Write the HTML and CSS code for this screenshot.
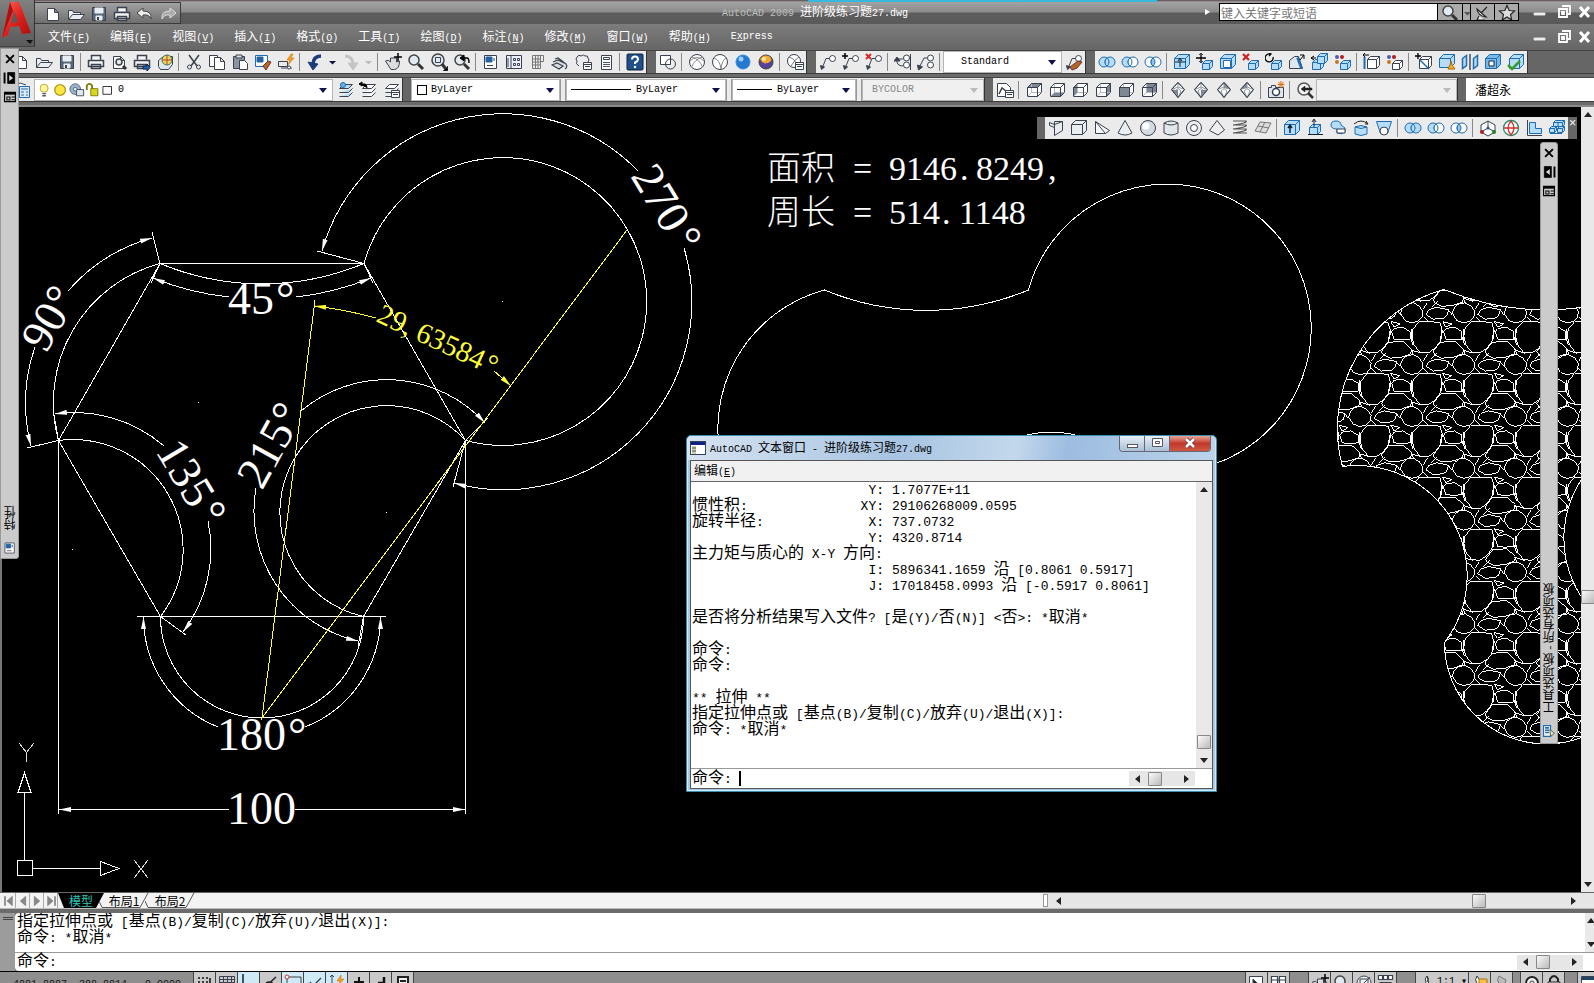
FILE: index.html
```html
<!DOCTYPE html>
<html lang="zh-CN">
<head>
<meta charset="utf-8">
<title>AutoCAD 2009 进阶级练习题27.dwg</title>
<link rel="stylesheet" href="styles.css">
</head>
<body>
<header class="chrome">
  <button class="app-button" aria-label="应用程序菜单">
    <svg width="34" height="46" viewBox="0 0 34 46">
      <defs><linearGradient id="red" x1="0" y1="0" x2="1" y2="1"><stop offset="0" stop-color="#ff6a5c"/><stop offset=".5" stop-color="#e0201c"/><stop offset="1" stop-color="#a30d0d"/></linearGradient></defs>
      <path d="M10 2h9l12 31-9 1-3-8-9 1-2 8-6 3z" fill="url(#red)"/>
      <path d="M10 2l3 9L2 38l1-4z" fill="#a81212"/>
      <path d="M14 11l4 11-7 1z" fill="#5a5a5a"/>
      <path d="M26 40h7l-3 4z" fill="#111"/>
    </svg>
  </button>
  <div class="titlebar">
    <div class="quick" data-icons="new openq saveq printq undoq redoq"></div>
    <h1 class="title"><span class="dim">AutoCAD 2009</span> <span class="z">进阶级练习题</span>27.dwg</h1>
    <div class="search">
      <span class="tri-right"></span>
      <input class="search-box z" type="text" placeholder="键入关键字或短语" aria-label="搜索">
      <div class="search-buttons" data-icons="zoom dropgray dish star"></div>
    </div>
    <div class="win-buttons" data-icons="wmin wmax wclose"></div>
  </div>
  <div class="menubar">
    <nav class="menus">
      <button><span class="z">文件</span>(<u>F</u>)</button>
      <button><span class="z">编辑</span>(<u>E</u>)</button>
      <button><span class="z">视图</span>(<u>V</u>)</button>
      <button><span class="z">插入</span>(<u>I</u>)</button>
      <button><span class="z">格式</span>(<u>O</u>)</button>
      <button><span class="z">工具</span>(<u>T</u>)</button>
      <button><span class="z">绘图</span>(<u>D</u>)</button>
      <button><span class="z">标注</span>(<u>N</u>)</button>
      <button><span class="z">修改</span>(<u>M</u>)</button>
      <button><span class="z">窗口</span>(<u>W</u>)</button>
      <button><span class="z">帮助</span>(<u>H</u>)</button>
      <button>E<u>x</u>press</button>
    </nav>
    <div class="win-buttons" data-icons="wmin wmax wclose"></div>
  </div>
  <div class="bars">
    <div class="bar bar-first" data-icons="new open save | print preview plot publish | cut copy paste match block | undo drop redo dropoff | pan zoom zoomwin zoomprev | props center palette sheet markup calc | help"></div>
    <div class="bar" data-icons="vs2d | wire3 wireh ball orb | vsman"></div>
    <div class="bar"><div class="run" data-icons="leader leaderadd leaderdel | leaderalign leadercol |"></div>
      <label class="combo w-std"><select aria-label="多重引线样式"><option>Standard</option></select></label>
      <div class="run" data-icons="leaderstyle"></div></div>
    <div class="bar" data-icons="union subtract intersect | extrudeface moveface offsetface delface rotface taperface copyface colorface | copyedge coloredge | imprint clean separate shell check"></div>
  </div>
  <div class="bars bars-second">
    <div class="bar bar-first"><div class="run" data-icons="layerprops"></div>
      <label class="combo w-layer"><span class="layer-icons" data-glyphs="bulb sun freeze lock swatch"></span><select aria-label="图层"><option>0</option></select></label>
      <div class="run" data-icons="layercur layerprev layerstate"></div></div>
    <div class="bar">
      <label class="combo w-color"><i class="swatch"></i><select aria-label="颜色"><option>ByLayer</option></select></label><i class="grip"></i>
      <label class="combo w-ltype"><i class="rule"></i><select aria-label="线型"><option>ByLayer</option></select></label><i class="grip"></i>
      <label class="combo w-lwt"><i class="rule"></i><select aria-label="线宽"><option>ByLayer</option></select></label><i class="grip"></i>
      <label class="combo w-plot off"><select aria-label="打印样式" disabled><option>BYCOLOR</option></select></label></div>
    <div class="bar"><div class="run" data-icons="viewman | vtop vbottom vleft vright vfront vback | iso1 iso2 iso3 iso4 | camera | vprev"></div>
      <label class="combo w-view off"><select aria-label="视图" disabled><option></option></select></label></div>
    <div class="bar bar-last"><label class="combo w-user z"><select aria-label="工作空间"><option>潘超永</option></select></label></div>
  </div>
</header>

<main class="workspace">
  <svg class="drawing" role="img" aria-label="图形">
    <defs>
      <marker id="arrow" markerUnits="userSpaceOnUse" markerWidth="13" markerHeight="6" refX="12" refY="3" orient="auto"><path d="M0 0.5L12 3L0 5.5z" fill="context-stroke"/></marker>
      <g id="stones">
        <path d="M41 40L48 22L62 11L80 9L97 18L109 35L106 52L95 64L75 69L55 62Z"/>
        <path d="M118 44L126 30L150 22L186 30L180 48L170 55L140 58Z"/>
        <path d="M97 66L138 66L160 68L166 90L160 125L145 145L125 159L100 158L82 135L76 110L78 88Z"/>
        <path d="M15 95L22 86L48 82L70 95L70 118L45 120L22 118Z"/>
        <path d="M-16 155L5 127L50 125L75 148L72 162L45 172L10 175L-10 165Z"/>
        <path d="M12 65L40 72L22 82Z"/>
        <path d="M74 86V120M70 110L79 136M12 90L8 118M-3 159L-22 178M110 28L122 8M110 50L124 64M72 150L104 160M186 32L196 44M74 148L80 165"/>
      </g>
      <path id="shape" d="M58.5 440.5A143.9 143.9 0 0 1 160 263.5A265.9 265.9 0 0 0 364 263.5A143.9 143.9 0 1 1 465.5 440.5A106.7 106.7 0 1 0 363.5 616.5A101.5 101.5 0 0 1 160.5 616.5A110.1 110.1 0 0 0 58.5 440.5Z"/>
      <clipPath id="hatched"><use href="#shape" x="1284" y="26"/></clipPath>
    </defs>
    <g transform="translate(0 -107)">
      <g class="line">
        <use href="#shape"/>
        <use href="#shape" x="664.5" y="26.5"/>
        <use href="#shape" x="1284" y="26"/>
        <g clip-path="url(#hatched)"><g id="gravel" class="gravel" transform="translate(1386.700 351.700) scale(.3333)"></g></g>
        <path d="M160 263.5H364L465.5 440.5L363.5 616.5M160.5 616.5L58.5 440.5L160 263.5M137 616.5H386M58.5 440.5V814M465.5 440.5V814"/>
        <path d="M364 263.5L317 251M465.5 440.5L453 487M160 263.5L152 232M58.5 440.5L27 448M160 263.5L151 283M364 263.5L373 283M58.5 440.5L53 409M160.5 616.5L186 635M465.5 440.5L488 418M363.5 616.5L358 647"/>
        <g marker-end="url(#arrow)">
          <path d="M638 171A188 188 0 0 0 322 251"/><path d="M684 248A188 188 0 0 1 454 483"/>
          <path d="M68 291A171 171 0 0 1 152 238"/><path d="M35 347A171 171 0 0 0 31 446"/>
          <path d="M229 297A282 282 0 0 1 153 278"/><path d="M296 297A282 282 0 0 0 371 278"/>
          <path d="M164 446A137.7 137.7 0 0 0 55 414"/><path d="M208 521A137.7 137.7 0 0 1 183 632"/>
          <path d="M301 411A133 133 0 0 1 485 423"/><path d="M256 488A133 133 0 0 0 358 641"/>
          <path d="M218 727A118.5 118.5 0 0 1 143.5 617"/><path d="M305 727A118.5 118.5 0 0 0 380.5 617"/>
          <path d="M229 809.5H59"/><path d="M295 809.5H465"/>
        </g>
        <path d="M24.5 860V793M18 792.5L24.5 773L31 792.5ZM33 868.5H100M100.5 861.5L119 868.5L100.5 875.5ZM17.5 860.5H32.5V875.5H17.5Z"/>
        <path d="M19 743L26.500 752.500L34 743M26.500 752.500V762M134 860L148 878M148 860L134 878" stroke="#ddd"/>
        <path d="M502 301h1M198 402h1M386 512h1M72 549h1"/>
      </g>
      <g class="line yellow">
        <path d="M315 300L262 718L627 230"/>
        <path d="M376 318A415 415 0 0 0 314 306" marker-end="url(#arrow)"/><path d="M494 371A415 415 0 0 1 511 386" marker-end="url(#arrow)"/>
      </g>
      <g class="dims">
        <text x="228" y="314">45<tspan x="276">°</tspan></text>
        <text x="217" y="750">180<tspan x="288">°</tspan></text>
        <text x="227" y="824">100</text>
        <text transform="translate(46 354) rotate(-60)">90<tspan x="47">°</tspan></text>
        <text transform="translate(155 451) rotate(59)">135<tspan x="73">°</tspan></text>
        <text transform="translate(262 491) rotate(-61)">215<tspan x="70">°</tspan></text>
        <text transform="translate(630 176) rotate(59)">270<tspan x="74">°</tspan></text>
        <text class="small" transform="translate(375 321) rotate(25)">29,<tspan x="43">63584</tspan><tspan x="118">°</tspan></text>
      </g>
      <g class="note">
        <text y="180"><tspan x="767">面积</tspan><tspan x="853">=</tspan><tspan x="889">9146</tspan><tspan x="960">.</tspan><tspan x="976">8249</tspan><tspan x="1048">,</tspan></text>
        <text y="224"><tspan x="767">周长</tspan><tspan x="853">=</tspan><tspan x="889">514</tspan><tspan x="942">.</tspan><tspan x="959">1148</tspan></text>
      </g>
    </g>
  </svg>

  <div class="vscroll"><i class="arrow up"></i><i class="thumb"></i><i class="arrow down"></i></div>

  <aside class="palette palette-left">
    <div data-icons="pclose phide pmenu" class="palette-buttons"></div>
    <span class="vertical z">特性</span>
    <div data-icons="props" class="palette-buttons"></div>
  </aside>
  <aside class="palette palette-right">
    <div data-icons="pclose phide2 pmenu" class="palette-buttons"></div>
    <span class="vertical z">工具选项板 - 所有选项板</span>
    <div data-icons="toolpal" class="palette-buttons"></div>
  </aside>

  <div class="bar floating" data-icons="polysolid box wedge cone sphere cylinder torus pyramid helix planar | extrude presspull sweep revolve loft | union subtract intersect | orbit3 globe ucs array3"><button class="float-close" aria-label="关闭">×</button></div>

  <section class="text-window">
    <header class="tw-title">
      <svg width="16" height="16"><rect x=".5" y="1.500" width="15" height="13" fill="#fff" stroke="#345"/><path d="M1 2h14v3H1z" fill="#14208a"/><path d="M2 6h4v8H2z" fill="#cfcfae"/><path d="M2 8h4M2 11h4" stroke="#555"/></svg>
      <h2>AutoCAD <span class="z">文本窗口</span> - <span class="z">进阶级练习题</span>27.dwg</h2>
      <div class="tw-buttons"><button aria-label="最小化"><svg width="24" height="15"><rect x="7.500" y="8.500" width="10" height="3" fill="#fff" stroke="#556"/></svg></button><button aria-label="最大化"><svg width="24" height="15"><path d="M7.500 2.500h10v8h-10zM10.500 5.500h4v2h-4z" fill="#fff" stroke="#556"/></svg></button><button class="close" aria-label="关闭"><svg width="40" height="15"><path d="M16 3l8 8M24 3l-8 8" stroke="#733" stroke-width="4"/><path d="M16 3l8 8M24 3l-8 8" stroke="#fff" stroke-width="2.500"/></svg></button></div>
    </header>
    <div class="tw-body">
      <nav class="tw-menu"><button><span class="z">编辑</span>(<u>E</u>)</button></nav>
      <div class="tw-log">
        <div class="log">
          <p class="row"><b></b><i>Y:</i><span>1.7077E+11</span></p>
          <p class="row"><b><span class="c">惯性积</span>:</b><i>XY:</i><span>29106268009.0595</span></p>
          <p class="row"><b><span class="c">旋转半径</span>:</b><i>X:</i><span>737.0732</span></p>
          <p class="row"><b></b><i>Y:</i><span>4320.8714</span></p>
          <p><span class="c">主力矩与质心的</span> X-Y <span class="c">方向</span>:</p>
          <p class="row"><b></b><i>I:</i><span>5896341.1659 <span class="c">沿</span> [0.8061 0.5917]</span></p>
          <p class="row"><b></b><i>J:</i><span>17018458.0993 <span class="c">沿</span> [-0.5917 0.8061]</span></p>
          <p></p>
          <p><span class="c">是否将分析结果写入文件</span>? [<span class="c">是</span>(Y)/<span class="c">否</span>(N)] &lt;<span class="c">否</span>&gt;: *<span class="c">取消</span>*</p>
          <p></p>
          <p><span class="c">命令</span>:</p>
          <p><span class="c">命令</span>:</p>
          <p></p>
          <p>** <span class="c">拉伸</span> **</p>
          <p><span class="c">指定拉伸点或</span> [<span class="c">基点</span>(B)/<span class="c">复制</span>(C)/<span class="c">放弃</span>(U)/<span class="c">退出</span>(X)]:</p>
          <p><span class="c">命令</span>: *<span class="c">取消</span>*</p>
        </div>
        <div class="vscroll tw-scroll"><i class="arrow up"></i><i class="thumb"></i><i class="arrow down"></i></div>
      </div>
      <div class="tw-prompt"><label for="tw-cmd"><span class="c">命令</span>:</label><i class="caret"></i><input id="tw-cmd" type="text">
        <div class="hscroll"><i class="arrow left"></i><i class="thumb"></i><i class="arrow right"></i></div></div>
    </div>
  </section>
</main>

<div class="tabs">
  <div class="tab-nav" data-icons="first prev next last"></div>
  <button class="tab z on"><svg width="46" height="15"><path d="M0 0H46L38 15H6Z" fill="#000"/></svg><span>模型</span></button>
  <button class="tab z"><svg width="50" height="15"><path d="M49 0L41 14.500H3L0 8" fill="none" stroke="#555"/></svg><span>布局1</span></button>
  <button class="tab z"><svg width="50" height="15"><path d="M49 0L41 14.500H3L0 8" fill="none" stroke="#555"/></svg><span>布局2</span></button>
  <div class="hscroll wide"><i class="split"></i><i class="arrow left"></i><i class="thumb"></i><i class="arrow right"></i></div>
</div>

<section class="command">
  <div class="cmd-grip"></div>
  <div class="cmd-main">
    <div class="cmd-history">
      <div class="log">
        <p><span class="c">指定拉伸点或</span> [<span class="c">基点</span>(B)/<span class="c">复制</span>(C)/<span class="c">放弃</span>(U)/<span class="c">退出</span>(X)]:</p>
        <p><span class="c">命令</span>: *<span class="c">取消</span>*</p>
      </div>
      <div class="vscroll cmd-scroll"><i class="arrow up"></i><i class="arrow down"></i></div>
    </div>
    <div class="cmd-line"><label for="cmd"><span class="c">命令</span>:</label><input id="cmd" type="text">
      <div class="hscroll"><i class="arrow left"></i><i class="thumb"></i><i class="arrow right"></i></div></div>
  </div>
</section>

<footer class="status">
  <span class="coords">4881.8887, 388.8814 , 0.0000</span>
  <div class="status-run" data-icons="snap grid ortho polar osnap otrack ducs dyn lwt qp"></div>
  <span class="gap"></span>
  <div class="status-run far" data-icons="model quick2"></div>
  <div class="status-run far" data-icons="pan zoom wheel motion"></div>
  <div class="status-run joined" data-icons="person"></div><span class="scale">1:1 ▾</span>
  <div class="status-run near" data-icons="annvis annauto"></div>
  <div class="status-run mid" data-icons="gear padlock"></div>
  <div class="status-run edge" data-icons="full"></div>
</footer>
<script src="app.js"></script>
</body>
</html>
```

FILE: styles.css
```css
* { box-sizing: border-box; }
body {
  margin: 0; height: 100vh; overflow: hidden;
  display: flex; flex-direction: column;
  background: #6b6b6b; color: #000;
  font: 10px/16px "Liberation Mono", "Noto Sans CJK SC", monospace;
}
button, input, select { font: inherit; color: inherit; border: 0; padding: 0; margin: 0; background: none; border-radius: 0; }
h1, h2, p { margin: 0; font-size: inherit; font-weight: normal; }
i, b { font-style: normal; font-weight: normal; }
svg { display: block; }
.z { font-size: 12px; font-family: "Noto Sans CJK SC", sans-serif; }
.c { font-size: 16px; line-height: 0; font-family: "Noto Sans CJK SC", sans-serif; }

.chrome { position: relative; flex: none; background: #6b6b6b; border-bottom: 2px solid #8a8a8a; }
.titlebar { display: flex; align-items: center; height: 24px; padding-left: 35px; color: #fff; background: linear-gradient(#5a4a50 0, #a2a2a2 2px, #8c8c8c 12px, #5c5c5c 13px, #5a5a5a); position: relative; }
.titlebar::before { content: ""; position: absolute; left: 808px; right: 437px; top: 0; height: 2px; background: #38b8dc; }
.app-button { position: absolute; left: 0; top: 0; width: 35px; height: 47px; z-index: 3; background: linear-gradient(#808080, #5a5a5a); border-right: 1px solid #333; border-bottom: 1px solid #444; }
.quick { display: flex; height: 22px; padding: 0 1px 0 6px; background: linear-gradient(#a2a2a2, #6e6e6e); border: 1px solid #3c3c3c; border-left: 0; margin-top: 2px; }
.title { flex: 1; padding-left: 244px; text-align: center; white-space: pre; }
.dim { color: #bdbdbd; }
.search { display: flex; align-items: center; }
.tri-right { border: 3px solid transparent; border-left: 5px solid #fff; }
.search-box { width: 219px; height: 18px; background: #fff; color: #222; border: 1px solid #000; padding: 0 1px; margin-left: 6px; }
.search-box::placeholder { color: #777; }
.search-buttons { display: flex; background: #ababab; border: 1px solid #000; border-left: 0; height: 18px; }
.search-buttons .tb { height: 16px; width: 24px; }
.search-buttons .tb.slim { width: 8px; }
.search-buttons .tb + .tb { border-left: 1px solid #000; }
.win-buttons { display: flex; margin-left: 9px; width: 66px; flex: none; overflow: hidden; }
.win-buttons .tb { width: 24px; }
.win-buttons .tb:last-child { width: 18px; }
.menubar { display: flex; justify-content: space-between; align-items: center; height: 26px; padding-left: 38px; color: #fff; background: linear-gradient(#7c7c7c, #666); }
.menus { display: flex; }
.menus button { padding: 0 10px; line-height: 20px; white-space: nowrap; }

.bars { display: flex; gap: 9px; height: 24px; border-top: 1px solid #444; border-bottom: 1px solid #3c3c3c; background: #666; white-space: nowrap; }
.bars-second { height: 25px; margin: 3px 0; gap: 8px; }
.bar { display: flex; align-items: center; background: #ebebeb; border-right: 1px solid #333; }
.bar-first { padding-left: 9px; }
.bars-second .bar-first { padding-left: 11px; }
.bar-last { flex: 1; background: #fff; border-right: 0; }
.run { display: flex; align-items: center; }
.tb { width: 23px; height: 22px; display: grid; place-items: center; flex: none; overflow: hidden; }
.tb svg { width: 18px; height: 18px; }
.tb.slim { width: 13px; }
.tb.slim svg { width: 9px; }
.sep { width: 6px; height: 18px; flex: none; border-left: 1px solid #888; margin-left: 2px; margin-right: -2px; }

.combo { position: relative; display: flex; align-items: center; height: 22px; background: #fff; border: 1px solid #b5b5b5; }
.combo::after { content: ""; position: absolute; right: 5px; top: 8px; border: 4px solid transparent; border-top: 5px solid #10104a; border-bottom: 0; }
.combo select { appearance: none; flex: 1; height: 20px; width: 100%; opacity: 1; }
.combo.off { background: #f0f0f0; color: #888; }
.combo.off::after { border-top-color: #bbb; }
.w-std { width: 119px; padding-left: 17px; }
.w-layer { width: 299px; padding-left: 2px; }
.w-layer select { padding-left: 3px; }
.w-color { width: 149px; padding-left: 5px; gap: 4px; }
.w-ltype { width: 160px; padding-left: 4px; gap: 5px; }
.w-lwt { width: 124px; padding-left: 4px; gap: 5px; }
.w-ltype .rule { width: 60px; flex: none; }
.w-lwt .rule { width: 35px; flex: none; }
.w-plot { width: 122px; padding-left: 9px; }
.w-view { width: 141px; }
.w-user { flex: 1; border: 0; padding-left: 9px; }
.w-user::after { display: none; }
.rule { border-top: 1px solid #000; }
.swatch { width: 10px; height: 10px; flex: none; border: 1px solid #000; }
.grip { width: 6px; height: 22px; border: solid #999; border-width: 0 1px; }
.layer-icons { display: flex; flex: none; }
.layer-icons svg { width: 16px; height: 18px; }
.layer-icons svg:last-child { width: 14px; }

.workspace { position: relative; flex: 1; min-height: 0; background: #000; border-left: 2px solid #777; display: flex; justify-content: flex-end; }
.drawing { position: absolute; left: -2px; top: 0; width: calc(100% - 11px); height: 100%; }
.line { fill: none; stroke: #fff; shape-rendering: crispEdges; }
.gravel { stroke-width: 3; }
.yellow { stroke: #ff3; }
.dims { fill: #fff; font: 46px "Liberation Serif", serif; }
.dims .small { fill: #ff3; font-size: 29px; }
.note { fill: #fff; font: 300 34px "Liberation Serif", "Noto Sans CJK SC", serif; }

.vscroll { position: relative; width: 13px; background: #e9e9e9; display: flex; flex-direction: column; align-items: center; padding: 5px 0; }
.hscroll { display: flex; align-items: center; height: 15px; background: #e6e6e6; padding: 0 6px; flex: none; width: 66px; }
.arrow { border: 4px solid transparent; flex: none; }
.arrow.up { border-bottom: 5px solid #222; border-top: 0; }
.arrow.down { border-top: 5px solid #222; border-bottom: 0; margin-top: auto; }
.arrow.left { border-right: 5px solid #222; border-left: 0; }
.arrow.right { border-left: 5px solid #222; border-right: 0; margin-left: auto; }
.thumb { width: 14px; height: 14px; flex: none; border: 1px solid #888; border-radius: 1px; background: linear-gradient(135deg, #fafafa, #bbb); }
.workspace > .vscroll > .thumb { margin-top: 473px; }
.hscroll .thumb { margin-left: 8px; }

.palette { position: absolute; background: #cbcbcb; border: 1px solid #999; display: flex; flex-direction: column; align-items: center; }
.palette-left { left: -2px; top: -59px; width: 19px; height: 511px; z-index: 4; border-radius: 0 0 3px 0; padding-bottom: 1px; }
.palette-right { left: 1538px; top: 35px; width: 18px; height: 602px; border-radius: 3px 3px 0 0; padding-bottom: 3px; }
.palette-buttons .tb { width: 17px; height: 19px; }
.palette-buttons .tb svg { width: 14px; height: 14px; }
.vertical { margin-top: auto; writing-mode: vertical-rl; transform: rotate(180deg); line-height: 16px; white-space: nowrap; margin-bottom: 8px; }

.floating { position: absolute; left: 1035px; top: 10px; height: 22px; border: 0; border-left: 8px solid #666; }
.floating .tb:first-child { margin-left: -1px; }
.float-close { align-self: stretch; width: 9px; background: #666; color: #fff; font-size: 12px; line-height: 12px; padding-bottom: 8px; }

.text-window { position: absolute; left: 684px; top: 328px; width: 531px; background: #a9c8e6; border: 1px solid #3a8fae; border-radius: 5px 5px 0 0; padding: 0 3px 2px; box-shadow: inset 0 0 0 1px #cfeaf5; }
.tw-title { display: flex; align-items: center; height: 24px; padding-left: 2px; gap: 4px; background: linear-gradient(100deg, #d6e3f1, #a8c4e2 40%, #c3d8ec 62%, #9cbce0 72%, #bcd4ea); margin: 0 -2px; border-radius: 4px 4px 0 0; }
.tw-title h2 { flex: 1; white-space: pre; }
.tw-buttons { display: flex; align-self: flex-start; margin-right: 4px; border: 1px solid #667; border-top: 0; border-radius: 0 0 4px 4px; overflow: hidden; }
.tw-buttons button { background: linear-gradient(#e8eff6, #a9bfd6); border-right: 1px solid #667; }
.tw-buttons .close { background: linear-gradient(#e6a698, #c2382a 50%, #cf5a44); border: 0; }
.tw-body { background: #fff; border: 1px solid #555; }
.tw-menu { height: 21px; background: #f1f1f1; padding-left: 3px; border-bottom: 1px solid #666; line-height: 18px; }
.tw-log { display: flex; height: 286px; }
.log { flex: 1; font-size: 13px; padding: 1px 0 0 1px; overflow: hidden; }
.log p { height: 16px; line-height: 16px; white-space: pre; }
.log .row { display: grid; grid-template-columns: 152px 40px 1fr; align-items: baseline; }
.row i { text-align: right; }
.row > span { padding-left: 8px; }
.tw-scroll { width: 16px; }
.tw-scroll .thumb { margin-top: auto; margin-bottom: 9px; }
.tw-scroll .arrow.down { margin-top: 0; }
.tw-prompt, .cmd-line { display: flex; align-items: center; border-top: 1px solid #999; font-size: 13px; height: 20px; padding-left: 1px; }
.tw-prompt label, .cmd-line label { padding-top: 2px; }
.tw-prompt input, .cmd-line input { flex: 1; min-width: 0; }
.tw-prompt .hscroll { margin-right: 17px; }
.caret { width: 2px; height: 15px; background: #000; margin-left: 7px; }

.tabs { display: flex; align-items: center; flex: none; height: 17px; background: #f3f3f3; border-top: 1px solid #666; border-bottom: 1px solid #bbb; }
.tab-nav { display: flex; padding-left: 2px; }
.tab-nav .tb { width: 14px; height: 15px; border-right: 1px solid #aaa; }
.tab-nav .tb svg { width: 12px; height: 12px; }
.tab { position: relative; height: 15px; line-height: 15px; margin-right: -4px; }
.tab.on { color: #2fc8b8; margin-right: -5px; }
.tab span { position: absolute; inset: 0; text-align: center; }
.hscroll.wide { flex: 1; max-width: 551px; margin-left: auto; padding: 0 18px 0 0; gap: 8px; }
.split { width: 5px; height: 13px; border: 1px solid #999; background: #fff; }
.wide .thumb { margin-left: 403px; }

.command { display: flex; flex: none; background: #6b6b6b; padding-top: 4px; border-bottom: 1px solid #000; }
.cmd-grip { width: 15px; background: linear-gradient(#444, #444) 3px 4px / 10px 1px no-repeat, linear-gradient(#444, #444) 3px 6px / 10px 1px no-repeat, #9c9c9c; }
.cmd-main { flex: 1; background: #fff; border-radius: 4px 0 0 4px; overflow: hidden; }
.cmd-history { display: flex; height: 39px; }
.command .log { padding-left: 2px; padding-top: 2px; }
.cmd-scroll { width: 12px; margin-right: -3px; }
.cmd-line { height: 19px; padding-left: 2px; }
.cmd-line .hscroll { margin-right: 11px; }

.status { display: flex; flex: none; height: 11px; overflow: hidden; background: #8e8e8e; align-items: flex-start; }
.coords { width: 193px; padding: 7px 0 0 13px; line-height: 12px; white-space: pre; color: #111; }
.status-run { display: flex; background: #c9c9c9; border-right: 1px solid #444; }
.status-run .tb { width: 22px; border-left: 1px solid #444; }
.status-run .tb.on { background: #cfeaf6; }
.far { margin-right: 18px; }
.near { margin-right: 7px; }
.mid { margin-right: 12px; }
.joined { border-right: 0; }
.edge { width: 17px; border-right: 0; overflow: hidden; }
.gap { flex: 1; }
.scale { width: 31px; height: 22px; padding-top: 4px; line-height: 12px; background: #c9c9c9; white-space: pre; }
```

FILE: app.js
```js
const D = '#39424e', B = '#1f6cb0', F = '#b5dcf8', G = '#7e8894';
const p = (d, f = 'none', s = D, w = 1) => `<path d="${d}" fill="${f}" stroke="${s}" stroke-width="${w}"/>`;
const c = (x, y, r, f = 'none', s = D, w = 1) => `<circle cx="${x}" cy="${y}" r="${r}" fill="${f}" stroke="${s}" stroke-width="${w}"/>`;
const cube = (x, y, w, h, k, f, s) => p(`M${x} ${y + k}l${k}-${k}h${w}v${h}l-${k} ${k}h-${w}z`, f, s) + p(`M${x} ${y + k}h${w}v${h}M${x + w} ${y + k}l${k}-${k}`, 'none', s);
const mini = cube(6.5, 7.5, 7, 6, 3, F, B);
const view = f => p('M2.500 6.500l4-4h10v9l-4 4h-10z', '#fff') + f + p('M6.500 3v8.500h10M6.500 11.500l-4 4', 'none', '#b4bac2') + p('M2.500 6.500h10v9M12.500 6.500l4-4');
const iso = f => p('M9 1.500l6.500 7L9 16.500 2.500 8.500z', '#fff') + f + p('M2.500 8.500L9 6l6.500 2.500M9 6V1.500M6 10l3 6.500 3-6.500-3-2.500z', 'none', '#8b939d') + p('M9 1.500l6.500 7L9 16.500 2.500 8.500z');
const lead = p('M3 15.500L7 5.500h4') + p('M1.500 12.500l1 4 3-2.500z', D) + c(13.500, 5.500, 3, '#fff');
const lens = (x = 7, y = 7, r = 5) => c(x, y, r, '#dfeaf2', '#444', 1.500) + p(`M${x + 4} ${y + 4}L16 16`, 'none', '#333', 3);
const stack = p('M3.500 7.500h9l4-4h-9zM3.500 11.500h9l4-4M3.500 15.500h9l4-4', '#fff');
const venn = (a, b, m) => c(6, 9, 5, a, B) + c(12, 9, 5, b, B) + p('M9 5a5 5 0 0 1 0 8a5 5 0 0 1 0-8', m, B);
const sheet = p('M3.500 3.500h7l4 4v8h-11zM10.500 3.500v4h4', '#fff');
const floppy = p('M2.500 2.500h13v13h-13z', '#59697c') + p('M5 3h8v5H5zM6 11h6v4H6z', '#e8edf2', '#e8edf2') + p('M8 12v3', 'none', D, 2);
const folder = p('M1.500 14.500v-9h4l1 2h7v2M1.500 14.500l4-5h12l-4 5z', '#e9eef2');
const printer = p('M4.500 6.500v-4h9v4M1.500 7.500h15v6h-15zM4.500 11.500h9v4h-9z', '#f4f4f4', D, 1.500);
const dots4 = c(3, 4, 2, '#4a5fb0', 'none') + c(8, 4, 2, '#b02020', 'none') + c(3, 9, 2, '#c27a20', 'none');
const tbl = p('M9.500 9.500h8v7h-8zM9.500 11.500h8M11 13.500h5', '#fff');
const I = {
  new: sheet, open: folder, save: floppy, print: printer, openq: folder, saveq: floppy, printq: printer,
  undoq: p('M7 3L1 8l6 5v-3q6-1 8 4q1-8-8-8z', '#eee', '#444'), redoq: p('M11 3l6 5-6 5v-3q-6-1-8 4q-1-8 8-8z', '#aaa', '#ddd'),
  preview: sheet + lens(9, 9, 3), plot: printer + p('M10 13h4v-2l3 3.500-3 3.500v-2h-4z', '#1e66b8', '#124'),
  publish: p('M2.500 7.500l5-4h9v8l-4 5h-8l-2-3z', '#dfe8f0') + c(11, 7, 5, '#e8d860', '#3a7a50') + p('M11 2v10M6 7h10', 'none', '#c04030'),
  cut: p('M4 2l8 11M14 2L6 13', 'none', D, 1.500) + c(4.500, 14, 2) + c(13.500, 14, 2),
  copy: p('M1.500 2.500h8v11h-8z', '#fff') + p('M6.500 4.500h6l4 4v8h-10zM12.500 4.500v4h4', '#fff'),
  paste: p('M2.500 3.500h11v12h-11z', '#8b94a0') + p('M5 2h6v3H5z', '#ddd') + p('M8.500 7.500h5l3 3v6h-8z', '#fff'),
  match: p('M1.500 2.500h12v11h-12z', '#fff', B) + p('M3 4h6v5H3z', '#2b5f9e', B) + p('M9 13l5-5 3 1-5 8z', '#b5651d', '#633'),
  block: p('M1.500 8.500h9v5h-9zM4 15h11') + p('M14 1l-4 6h3l-2 5 6-7h-3l2-4z', '#f6a020', '#c60', .5) + c(12, 14.500, 1.500, '#fff'),
  undo: p('M15 3q-8 0-8 9', 'none', '#1d3d78', 3.500) + p('M2 9l5 8 5-6z', '#1d3d78', '#1d3d78'),
  redo: p('M3 3q8 0 8 9', 'none', '#c4c4c4', 3) + p('M6 10l5 7 5-7z', '#c4c4c4', '#c4c4c4'),
  drop: '<path d="M2 7h14l-7 7z" fill="#10104a"/>', dropoff: '<path d="M2 7h14l-7 7z" fill="#bbb"/>', dropgray: '<path d="M2 7h14l-7 7z" fill="#555"/>',
  pan: p('M1.500 8q3-2 5 1V5h6v4l3-1q0 8-5 8.500H7z', '#ddd') + p('M14 0v8M10 4h8', 'none', '#000', 1.500),
  zoom: lens(), zoomwin: lens(8, 7, 6) + p('M5.500 4.500h5v5h-5z') + p('M18 13v5h-5z', '#000'),
  zoomprev: lens() + p('M8 5h6q2 0 2 5', 'none', '#000', 1.500) + p('M7 5l4-3v6z', '#000', '#000'),
  props: p('M2.500 2.500h12v13h-12z', '#fff') + p('M4 4h6v5H4z', '#2b5f9e', B) + p('M12 5v3M5 12.500h6'),
  center: p('M1.500 2.500h15v13h-15zM6 2v14M8.500 5.500h2v2h-2zM12.500 5.500h2v2h-2zM8.500 10.500h2v2h-2zM12.500 10.500h2v2h-2zM3 5v9', '#eef'),
  palette: p('M4.500 2.500h8v13h-8zM12.500 2.500h3v6h-3zM7.500 3v12M10 3v12M5 6h7M5 9h7M5 12h7', '#eee', '#777'),
  sheet: p('M1 12l5-2 6 3-4 3zM2 9l5-2 6 3M4 6l3-1 8 6q2 3-1 5', '#ddd', D, 1.200),
  markup: p('M3 4q2-3 4-1q3-2 4 0q3-1 3 2q2 2 0 4M3 4q-2 2 0 4q-2 3 2 5') + tbl,
  calc: p('M4.500 2.500h10v14h-10zM6.500 4.500h6v2h-6z', '#fff') + p('M6 9.500h7M6 11.500h7M6 13.500h7', 'none', '#556', 1),
  help: `<rect x="1" y="1" width="16" height="16" rx="1" fill="#1e4f8c" stroke="#123"/>` + p('M6 6.500q0-3 3-3t3 3q0 1.500-3 3V11', 'none', '#fff', 2) + c(9, 14, 1.200, '#fff', 'none'),
  vs2d: p('M1.500 2.500h10v9h-10z', '#fff') + c(11.500, 11, 5, 'none'),
  wire3: c(9, 9, 7.500, '#fff') + p('M3.500 4q8 2 11 10M14.500 4Q7 6 3.500 14M2 8q7-7 14 0', 'none', '#888'),
  wireh: c(9, 9, 7.500, '#fff') + p('M3 5q6 2 7 11M15 5q-4 2-5 11', 'none', '#888'),
  ball: c(9, 9, 7, '#2478d0', '#3a8ae0') + c(7, 6, 2.500, '#9ccdf8', 'none'),
  orb: c(9, 9, 7, '#56409a', '#443') + p('M3 6q3-5 9-3q4 3 1 6-7 4-10-3', '#f0a830', 'none') + c(7, 6, 2, '#ffe9a0', 'none'),
  vsman: c(8, 8, 6.500, '#fff') + p('M3 4q7 2 8 10M13 4q-4 2-8 9', 'none', '#777') + tbl,
  leader: lead, leaderadd: lead + p('M3 0v6M0 3h6', 'none', '#000', 1.500), leaderdel: lead + p('M1 1l5 5M6 1L1 6', 'none', '#d22', 1.800),
  leaderalign: p('M16.500 1v16M3 6h6M3 6q-1 7 6 7') + p('M0 8l3-4 3 4z', D) + c(12.500, 5, 3, '#fff') + c(12.500, 12, 3, '#fff'),
  leadercol: p('M2 15L7 5h3') + p('M0.500 12l1 5 4-3z', D) + c(13.500, 5, 3, '#fff') + c(13.500, 12, 3, '#fff'),
  leaderstyle: lead + p('M5 14l8-6 4 1-5 6-5 2z', '#b5651d', '#633'),
  union: venn(F, F, F), subtract: venn(F, '#fff', '#fff'), intersect: venn('#fff', '#fff', '#8cc4f2'),
  extrudeface: cube(1.500, 1.500, 11, 10, 4, F, B) + p('M2 9h11M7 14V6M5 8l2-3 2 3', 'none', '#123'),
  moveface: mini + p('M5 0v10M0 5h10', 'none', '#000', 1.300) + p('M3 2l2-2 2 2M3 8l2 2 2-2'),
  offsetface: cube(1.500, 1.500, 11, 10, 4, F, B) + p('M4.500 7.500h7v7h-7z', '#fff', B),
  delface: mini + p('M1 1l6 6M7 1L1 7', 'none', '#c22', 2.200), rotface: mini + p('M5 1a4 4 0 1 0 3 3M4 0l2 1-2 2', 'none', '#000', 1.300),
  taperface: p('M1.500 15.500v-8l5-4h4l4 12z', '#dfe6ee', D) + p('M9.500 4.500l4 11', 'none', B, 2.500) + p('M12 7l4-5M12 2h4v4', 'none', '#000'),
  copyface: cube(1.500, 6.500, 8, 7, 3, F, B) + cube(6.500, .500, 7, 7, 3, F, B) + p('M0 5h5M3 3l-3 2 3 2', 'none', '#000'),
  colorface: mini + dots4, copyedge: cube(4.500, 3.500, 9, 9, 3, '#fff', D) + p('M1.500 4v12', 'none', B, 2) + p('M0 2h6M2 0L0 2l2 2', 'none', '#000'),
  coloredge: cube(6.500, 7.500, 7, 6, 3, '#fff', D) + dots4,
  imprint: cube(4.500, 3.500, 9, 9, 3, '#fff', D) + p('M5 7l9 9', 'none', B, 1.500) + p('M3 0v6M0 3h6', 'none', '#000', 1.300),
  clean: cube(1.500, 1.500, 11, 9, 4, F, B) + p('M13 8l1 4 3 4h-7l2-4z', '#f5b020', '#a60'),
  separate: p('M1.500 5.500l4-3v10l-4 3zM12.500 5.500l4-3v10l-4 3z', F, B, 1.500) + p('M9 1v16', 'none', '#000', 1),
  shell: cube(1.500, 1.500, 11, 10, 4, '#7ab8ea', B) + p('M5 8h5v5H5z', '#fff', '#124'),
  check: cube(2.500, 1.500, 10, 10, 4, F, B) + p('M1 12l4 4 8-8', 'none', '#3a9a2a', 2.500),
  layerprops: p('M1 5l5-3 6 2', '#fff') + p('M5.500 5.500h10v11h-10zM7 8h7M7 11h3M12 11h2M7 14h3M12 14h2', '#dfeaf5', B),
  layercur: stack.replace('#fff', F) + c(7, 4, 2.500, '#6bb2ec', B), layerprev: stack + p('M0 3h6q2 0 2 4M0 3l3-2v4z', '#000', '#000'), layerstate: stack + tbl,
  bulb: c(8, 7, 4.500, '#fff6a0', '#b8a020') + p('M6 13h4M6 15.500h4', 'none', '#555', 1.500), sun: c(8, 9, 6, '#ffe640', '#a89a20', 1.500),
  freeze: c(7, 8, 6, '#9ab4c8', '#567') + p('M8.500 8.500h8v7h-8z', '#dfe8f0') + c(7, 8, 2, '#dff', '#567'),
  lock: p('M2 9V4q3-4 6 0v4', 'none', '#770', 2) + p('M6.500 7.500h8v8h-8z', '#d8d820', '#770'), swatch: p('M2.500 4.500h11v10h-11z', '#fff', '#000'),
  viewman: p('M1.500 2.500h9l4 4v9h-13z', '#fff') + p('M3 13l3-6 4 3', 'none', D, 1.500) + tbl,
  vtop: view(p('M2.500 6.500l4-4h10l-4 4z', G)), vbottom: view(p('M2.500 15.500l4-4h10l-4 4z', G)), vleft: view(p('M2.500 6.500l4-4v9l-4 4z', G)),
  vright: view(p('M12.500 6.500l4-4v9l-4 4z', G)), vfront: view('') + p('M2.500 6.500h10v9h-10z', G), vback: view(p('M6.500 2.500h10v9h-10z', G)),
  iso1: iso(p('M2.500 8.500L9 9v7.500z', G, 'none')), iso2: iso(p('M15.500 8.500L9 9v7.500z', G, 'none')), iso3: iso(p('M9 1.500l6.500 7L9 7z', G, 'none')), iso4: iso(p('M9 1.500l-6.500 7L9 7z', G, 'none')),
  camera: p('M1.500 6.500h3v-2h4v2h8v10h-15z', '#dfe6ee') + c(9, 11, 3.500, '#fff', D, 1.500) + p('M14 0v7M10.500 3.500h7M11.500 1l5 5M16.500 1l-5 5', 'none', '#e07010'),
  vprev: c(8, 8, 6, '#f4f4f4', '#555', 1.500) + p('M5 8l4-3v2h7v2H9v2z', '#222', '#222', .5) + p('M12 12l5 5', 'none', '#333', 2.500),
  polysolid: p('M2.500 3.500l5 2v-3h8v9l-8 5v-8l-5-2z', '#e8ecf0') + p('M7.500 5.500l8-3M7.500 9V5'), box: cube(1.500, 1.500, 11, 10, 4, '#e9eef3', D),
  wedge: p('M2.500 2.500v12h10l4-3zM12.500 14.500L2.500 2.500', '#f4f6f8'), cone: p('M9 1.500L2 14q7 4 14 0z', '#eceff2'),
  sphere: c(9, 9, 7.500, '#d4dae0') + c(7, 7, 3.500, '#fff', 'none'), cylinder: p('M2 4v10q7 4 14 0V4q-7-4-14 0q7 4 14 0', '#e2e7ec'),
  torus: c(9, 9, 7.500, '#eee', D) + c(9, 9, 3.500, '#fff', D), pyramid: p('M9 1.500L1.500 11.500 10 16l6.500-5z', '#eee'),
  helix: p('M2 2h13q2 2-13 4h13q2 2-13 4h13q2 2-13 4h14', 'none', '#555', 1.200), planar: p('M6 3l11 1-5 10-11-2zM4 7l11 2M11 3L6 13', '#ddd', '#777'),
  extrude: cube(1.500, 1.500, 11, 10, 4, F, B) + p('M7 14V7M5 9l2-3 2 3', 'none', '#123', 1.500), presspull: cube(3.500, 5.500, 8, 7, 3, F, B) + p('M8 8V1M6 3l2-3 2 3M2 15.500h15', 'none', '#123'),
  sweep: p('M2 6q0-4 5-4t5 4l4 3v4q-3 3-8 1v-4q-6 0-6-4z', F, B) + p('M8 10h8v4H8z', '#fff', D), revolve: p('M3 8v7q6 3 12 0V8q-6-3-12 0q6 3 12 0', F, B) + p('M2 5q7-6 14 0M14 2l2 3h-3', 'none', '#222'),
  loft: p('M1.500 2.500h15l-4 12h-7z', F, B) + c(9, 12, 4, '#fff', D), orbit3: p('M9 2l7 4v7l-7 4-7-4V6zM9 2v7M9 9l7 4M9 9l-7 4', '#fff', D) + c(9, 9, 1.500, '#258', 'none') + c(3, 13, 2, '#a22', 'none') + c(15, 13, 2, '#282', 'none'),
  globe: c(9, 9, 7.500, '#fff', '#2a8a6a', 1.300) + p('M2 9h14M9 2q-6 7 0 14q6-7 0-14', 'none', '#c33', 1.300), ucs: p('M2.500 1v15.500H17', 'none', D) + p('M4.500 3.500h6v6h6v5h-12z', F, B),
  array3: cube(1.500, 7.500, 5, 4, 2, F, B) + cube(9.500, 7.500, 5, 4, 2, F, B) + cube(5.500, 1.500, 9, 4, 2, F, B) + p('M10 3v5M2 14.500h12', 'none', B),
  dish: p('M3 5q1 7 9 8zM7 9l6-6M5 12l-2 4h8', '#eee', '#222', 1.200), star: p('M9 1.500l2.200 5 5.300.500-4 3.500 1.200 5.500L9 13l-4.700 3 1.200-5.500-4-3.500 5.300-.500z', '#ddd', '#222', 1.200),
  wmin: p('M3 10h11v2H3z', '#fff', '#ddd'), wmax: p('M7 3h8v8h-3M4 6h8v8H4zM7 9h2v2H7z', 'none', '#fff', 1.800), wclose: p('M4 4l9 10M13 4L4 14', 'none', '#fff', 3),
  pclose: p('M4 4l10 10M14 4L4 14', 'none', '#000', 2.500), phide: p('M2 2v14', 'none', '#000', 2.500) + p('M6 2h9v14H6z', '#000', '#000') + p('M8 5v8l5-4z', '#ddd', 'none'),
  phide2: p('M16 2v14', 'none', '#000', 2.500) + p('M3 2h9v14H3z', '#000', '#000') + p('M10 5v8L5 9z', '#ddd', 'none'), pmenu: p('M2 3h14v12H2z', '#ccc', '#000', 1.500) + p('M2 4.500h14', 'none', '#000', 3) + p('M5 9h4v4H5zM11 9h5M11 12.500h5', 'none', '#000', 1.300),
  toolpal: p('M2 2h9v14H2z', '#fff', B, 1.500) + p('M4 5h5M4 8h5M4 11h5', 'none', B, 2) + p('M10 7l6 5-5 4z', '#e8e8a0', '#345'),
  first: p('M3 2v14', 'none', '#666', 2) + p('M14 2v14L6 9z', '#888', '#777'), prev: p('M13 2v14L5 9z', '#888', '#777'), next: p('M5 2v14l8-7z', '#888', '#777'), last: p('M15 2v14', 'none', '#666', 2) + p('M4 2v14l8-7z', '#888', '#777'),
  snap: p('M2 4h2M6 4h2M10 4h2M2 8h2M6 8h2M10 8h2M14 4v8', 'none', '#111', 1.500), grid: p('M1.500 2.500h15v13h-15zM1 5.500h16M1 8.500h16M5.500 2v14M9.500 2v14M13.500 2v14'), ortho: p('M3 0v14h14', 'none', '#123', 1.500), polar: p('M2 14L14 3M4 9a5 5 0 0 1 8 4', 'none', '#222', 1.500),
  osnap: p('M3 3h14v12H3z', 'none', '#344') + c(3, 3, 2, '#fff', '#c33'), otrack: p('M4 8l3 4 8-8', 'none', '#246', 1.300), ducs: p('M4 1v12M2 3l2-2 2 2') + p('M13 1l-4 6h3l-2 5 6-7h-3z', '#f6a020', '#c60', .5), dyn: p('M9 3v12M4 8h10', 'none', '#111', 2), lwt: p('M12 3v6H6', 'none', '#111', 2.500), qp: p('M4 3h10v12H4zM6 7h6', '#eee', '#222', 2),
  model: p('M1.500 2.500h13v12h-13z', '#fff') + p('M5 5l8 8H5z', '#222'), quick2: p('M1.500 2.500h6v10h-6zM9.500 2.500h6v10h-6zM1 6h15', '#fff', D, 1.200), wheel: c(9, 9, 7, '#eee') + p('M3 15L15 3M5 5h8v8H5z'), motion: p('M1.500 1.500h4v4h-4zM6.500 1.500h4v4h-4zM11.500 1.500h4v4h-4zM3 8.500h11v5H3z', '#fff', D, 1.200),
  person: p('M9 2q3 3 0 6M9 2q-3 3-1 6l-2 6h6z', '#fff', '#333'), annvis: p('M6 2q-3 4 0 7v6h4V8z', '#fff', '#333') + p('M8 5h8v8H8z', '#f3c050', '#a70'), annauto: p('M6 2q-3 4 0 7l5 4 2-7z', '#bbb', '#777'), gear: c(9, 9, 6, '#eee', '#222', 2) + c(9, 9, 2), padlock: p('M5 8V5q4-6 8 0v3', 'none', '#222', 2) + p('M3 8h12v8H3z', '#eee', '#222'), full: p('M1.500 2.500h15v13h-15z', '#fff') + p('M2 4.500h14', 'none', '#246', 3)
};
const svg = k => `<svg viewBox="0 0 18 18" aria-hidden="true">${I[k] || ''}</svg>`;
const slim = { drop: 1, dropoff: 1, dropgray: 1 }, on = { ortho: 1, osnap: 1, otrack: 1, ducs: 1 };
document.querySelectorAll('[data-icons]').forEach(el => {
  el.insertAdjacentHTML('afterbegin', el.dataset.icons.split(' ').map(k =>
    k === '|' ? '<i class="sep"></i>' : `<button class="tb${slim[k] ? ' slim' : ''}${on[k] ? ' on' : ''}" aria-label="${k}">${svg(k)}</button>`).join(''));
});
document.querySelectorAll('[data-glyphs]').forEach(el => { el.innerHTML = el.dataset.glyphs.split(' ').map(svg).join(''); });

const STEP = 155.5;
let tiles = '';
for (let row = -2; row < 8; row++) for (let col = -2; col < 5; col++) tiles += `<use href="#stones" x="${col * STEP}" y="${row * STEP}"/>`;
document.getElementById('gravel').innerHTML = tiles;
```
